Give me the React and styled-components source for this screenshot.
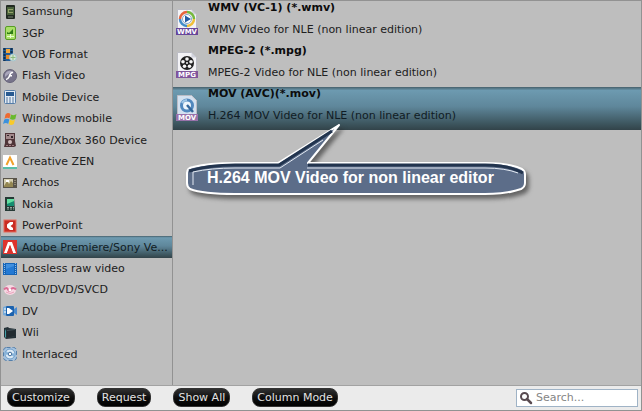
import { useState } from "react";
import styled, { createGlobalStyle, css } from "styled-components";

const devices = [
    { name: "Samsung", Icon: SamsungIcon },
    { name: "3GP", Icon: ThreeGpIcon },
    { name: "VOB Format", Icon: VobIcon },
    { name: "Flash Video", Icon: FlashIcon },
    { name: "Mobile Device", Icon: MobileIcon },
    { name: "Windows mobile", Icon: WindowsIcon },
    { name: "Zune/Xbox 360 Device", Icon: ZuneIcon },
    { name: "Creative ZEN", Icon: ZenIcon },
    { name: "Archos", Icon: ArchosIcon },
    { name: "Nokia", Icon: NokiaIcon },
    { name: "PowerPoint", Icon: PowerPointIcon },
    { name: "Adobe Premiere/Sony Ve...", Icon: AdobeIcon },
    { name: "Lossless raw video", Icon: LosslessIcon },
    { name: "VCD/DVD/SVCD", Icon: DiscIcon },
    { name: "DV", Icon: DvIcon },
    { name: "Wii", Icon: WiiIcon },
    { name: "Interlaced", Icon: InterlacedIcon },
];

const formats = [
    { title: "WMV (VC-1) (*.wmv)", text: "WMV Video for NLE (non linear edition)", Icon: WmvIcon },
    { title: "MPEG-2 (*.mpg)", text: "MPEG-2 Video for NLE (non linear edition)", Icon: MpgIcon },
    { title: "MOV (AVC)(*.mov)", text: "H.264 MOV Video for NLE (non linear edition)", Icon: MovIcon, hint: "H.264 MOV Video for non linear editor" },
];

const App = () => {
    const [device, setDevice] = useState("Adobe Premiere/Sony Ve...");
    const [format, setFormat] = useState("MOV (AVC)(*.mov)");
    const [search, setSearch] = useState("");

    return (
        <Window>
            <GlobalStyle />
            <Panels>
                <DeviceList>
                    {devices.map(({ name, Icon }) => (
                        <DeviceItem key={name}>
                            <DeviceButton type="button" $active={name === device} onClick={() => setDevice(name)}>
                                <Icon />
                                <span>{name}</span>
                            </DeviceButton>
                        </DeviceItem>
                    ))}
                </DeviceList>
                <FormatList>
                    {formats.map(({ title, text, hint, Icon }) => (
                        <FormatItem key={title}>
                            <FormatButton type="button" $active={title === format} onClick={() => setFormat(title)}>
                                <Icon />
                                <FormatText>
                                    <FormatTitle>{title}</FormatTitle>
                                    <span>{text}</span>
                                </FormatText>
                            </FormatButton>
                            {hint && title === format && (
                                <Callout role="note">
                                    <CalloutShape />
                                    <CalloutText>{hint}</CalloutText>
                                </Callout>
                            )}
                        </FormatItem>
                    ))}
                </FormatList>
            </Panels>
            <Footer>
                <Actions>
                    <PillButton type="button">Customize</PillButton>
                    <PillButton type="button">Request</PillButton>
                    <PillButton type="button">Show All</PillButton>
                    <PillButton type="button">Column Mode</PillButton>
                </Actions>
                <SearchBox>
                    <SearchIcon />
                    <SearchInput
                        type="text"
                        aria-label="Search"
                        placeholder="Search..."
                        value={search}
                        onChange={(e) => setSearch(e.target.value)}
                    />
                </SearchBox>
            </Footer>
        </Window>
    );
}

export default App

function Small({ children }) {
    return <SmallIcon viewBox="0 0 14 14" aria-hidden="true">{children}</SmallIcon>;
}

function SamsungIcon() {
    return (
        <Small>
            <rect x="3" y="0" width="9" height="14" rx="1" fill="#222a22" />
            <rect x="4" y="2" width="7" height="8" fill="#49613a" />
            <path d="M5 4h5v1H6v2h4v1H5z" fill="#95a36b" />
            <path d="M5 12h5" stroke="#75806e" />
        </Small>
    );
}

function ThreeGpIcon() {
    return (
        <Small>
            <rect x="2.5" y=".5" width="10" height="13" rx="1.5" fill="#a9df68" stroke="#579c25" />
            <path d="M4 8V6l2 1 4-4v5z" fill="#2f7d16" />
            <path d="M4 10.5h7M7.5 8v4" stroke="#e8ffd0" />
        </Small>
    );
}

function VobIcon() {
    return (
        <Small>
            <rect x="0" y="0" width="10" height="13" fill="#235d98" />
            <path d="M1.5 0v13M8.5 0v13" stroke="#13314f" strokeWidth="2" strokeDasharray="2 1" />
            <rect x="3" y="1" width="4" height="4" fill="#f3a63c" />
            <rect x="3" y="7" width="4" height="4" fill="#e58a2a" />
            <circle cx="10" cy="9.5" r="3.5" fill="#d5e5d4" stroke="#a5c5cf" />
            <path d="M10 7v5M7.5 9.5h5" stroke="#8dbb7e" />
        </Small>
    );
}

function FlashIcon() {
    return (
        <Small>
            <circle cx="7" cy="7" r="6.5" fill="#77748b" stroke="#666379" />
            <path d="M2 5a5.5 5.5 0 0 1 9-1.5C8 3 5 5 2 8z" fill="#aaa7bc" />
            <path d="M10 3.5C7 3 7 6 6 8s-1.5 2.500-3 2.500M6 6.8h3" fill="none" stroke="#fff" strokeWidth="1.600" />
        </Small>
    );
}

function MobileIcon() {
    return (
        <Small>
            <rect x="1.5" y=".5" width="11" height="13" rx="1" fill="#e2ebf4" stroke="#547da8" />
            <rect x="3" y="2" width="8" height="4" fill="#285a91" />
            <path d="M3 8h8M3 10h8M3 12h8" stroke="#55779e" strokeDasharray="2 1" />
        </Small>
    );
}

function WindowsIcon() {
    return (
        <Small>
            <path d="M2.500 2.500Q5 0 7.500 2L6.500 6.500Q4 5 1.500 7z" fill="#ed6a31" />
            <path d="M8 2.500q3 1.500 5.500-.5l-1.200 5Q10 8.500 7 7z" fill="#69b92d" />
            <path d="M1.300 7.500Q4 5.800 6.300 7.500L5.200 12Q3 10 0 12z" fill="#3b91dc" />
            <path d="M7 7.800q3 1.500 5 0L10.800 12Q8 14 5.800 12z" fill="#f8ca29" />
        </Small>
    );
}

function ZuneIcon() {
    return (
        <Small>
            <path d="M2 0h10v8l1 5-2 1H1l1-4z" fill="#503538" />
            <rect x="3" y="1" width="8" height="5" fill="#a2898b" />
            <path d="M4 2h2v1H4zm4 1h2v2H8z" fill="#312428" />
            <circle cx="7" cy="9" r="2" fill="#d0bbbc" />
            <path d="M3 12.500h8" stroke="#9f787c" strokeDasharray="2 1" />
        </Small>
    );
}

function ZenIcon() {
    return (
        <Small>
            <path fill="#fff" d="M0 0h14v14H0z" />
            <path d="M3.500 10L7 2.500l3.500 7.500" fill="none" stroke="#f0a12c" strokeWidth="2" />
            <path d="M0 13h14" stroke="#58bea8" strokeWidth="2" />
        </Small>
    );
}

function ArchosIcon() {
    return (
        <Small>
            <path fill="#595449" d="M0 2h14v10H0z" />
            <path fill="#d6d0b2" d="M1 3h9v8H1z" />
            <path d="M1 10l3-5 2 3 2-3 2 2v4H1z" fill="#948752" />
            <path d="M3 4h3v2H3z" fill="#fff" />
            <path d="M12 4v6" stroke="#c6bca4" strokeDasharray="1 1" />
        </Small>
    );
}

function NokiaIcon() {
    return (
        <Small>
            <path fill="#263a36" d="M2 0h9l1 14H2z" />
            <path fill="#168d70" d="M4 2h7v7H4z" />
            <path fill="#62dfa0" d="M4 2h7v2L4 7z" />
            <path d="M4 10.500h7M4 12h7" stroke="#98aaa0" strokeDasharray="2 1" />
        </Small>
    );
}

function PowerPointIcon() {
    return (
        <Small>
            <rect x="1" y="1" width="12" height="12" fill="#c92c22" stroke="#e46b5c" />
            <path d="M10 3H7L4 5.500v3L7 11h3V9L7.500 7 10 5z" fill="#fff" />
        </Small>
    );
}

function AdobeIcon() {
    return (
        <Small>
            <path fill="#de332d" d="M0 0h14v14H0z" />
            <path d="M5 2h4l4 11h-3L7 5 4 13H1z" fill="#fff" />
            <path d="M7 5l3 8H4z" fill="#de332d" />
        </Small>
    );
}

function LosslessIcon() {
    return (
        <Small>
            <path fill="#1664b7" d="M0 1h14v12H0z" />
            <path fill="#2379d4" d="M3 2h8v10H3z" />
            <path d="M1.500 1v12M12.500 1v12" stroke="#8fbce8" strokeDasharray="1 1" />
            <path d="M3 2h8v2L3 7z" fill="#408fdf" />
        </Small>
    );
}

function DiscIcon() {
    return (
        <Small>
            <ellipse cx="7" cy="7" rx="6" ry="5" fill="#f6d8e3" />
            <path d="M1 6.500c2-2 3-2 4 0s2 2 3 0 3-2 5 0" fill="none" stroke="#d96d95" strokeWidth="2" />
            <circle cx="7" cy="7" r="1.500" fill="#fff" />
            <path d="M3 9q4 3 8 0" fill="none" stroke="#eaa3bd" />
        </Small>
    );
}

function DvIcon() {
    return (
        <Small>
            <path d="M0 3l3-1v10l-3-1z" fill="#78abd9" />
            <rect x="3" y="2" width="8" height="10" rx="1" fill="#1c62ae" />
            <path d="M4 4h2l4 3-4 3H4z" fill="#fff" />
            <path d="M11 5l3-2v8l-3-2z" fill="#4b8bcf" />
            <path d="M2 4v6" stroke="#fff" strokeDasharray="2 1" />
        </Small>
    );
}

function WiiIcon() {
    return (
        <Small>
            <path d="M1 2l4-1 1 1 7 1v9L3 13 1 11z" fill="#253137" />
            <path d="M4 4l8-1v7l-8 2z" fill="#46545a" />
            <path d="M2 3v8l1 1V5z" fill="#44a0a7" />
            <path d="M4 5l8-1v6l-8 2z" fill="#222b30" />
        </Small>
    );
}

function InterlacedIcon() {
    return (
        <Small>
            <rect x=".5" y=".5" width="13" height="13" rx="3" fill="#a4c2df" stroke="#547faa" strokeDasharray="4 2" />
            <circle cx="7" cy="7" r="5" fill="#dceaf6" stroke="#6b9bc7" />
            <path d="M3 4l4 3-5 1zm8 6L7 7l5-1z" fill="#89b5dc" />
            <circle cx="7" cy="7" r="1.800" fill="#fff" stroke="#416f9d" />
        </Small>
    );
}

function FileIcon({ label, color, children }) {
    return (
        <BigIcon viewBox="0 0 22 27" aria-hidden="true">
            <path d="M1.500.5h14l5 5v20h-19z" fill="#f3f3f6" stroke="#bbbcc5" />
            <path d="M15.500.5v5h5z" fill="#d2d3dc" />
            {children}
            <rect x="0" y="19" width="22" height="7" fill={color} />
            <text x="11" y="25" textAnchor="middle" fontFamily="DejaVu Sans, sans-serif" fontWeight="700" fontSize="7" fill="#fff">{label}</text>
        </BigIcon>
    );
}

function WmvIcon() {
    return (
        <FileIcon label="WMV" color="#67469a">
            <path d="M4 10a7 7 0 0 1 7-7" fill="none" stroke="#e7643d" strokeWidth="2.500" />
            <path d="M11 3a7 7 0 0 1 7 7" fill="none" stroke="#75b83e" strokeWidth="2.500" />
            <path d="M18 10a7 7 0 0 1-7 7" fill="none" stroke="#efbf37" strokeWidth="2.500" />
            <path d="M11 17a7 7 0 0 1-7-7" fill="none" stroke="#438dc8" strokeWidth="2.500" />
            <circle cx="11" cy="10" r="4.500" fill="#fff" stroke="#8ca9c8" />
            <path d="M9 6.500l6 3.500-6 3.500z" fill="#245ca4" />
        </FileIcon>
    );
}

function MpgIcon() {
    return (
        <FileIcon label="MPG" color="#80559c">
            <circle cx="11" cy="11" r="7" fill="#202020" />
            <g fill="#f5f5f5">
                <circle cx="11" cy="7" r="1.800" />
                <circle cx="15" cy="9.800" r="1.800" />
                <circle cx="13.500" cy="14.300" r="1.800" />
                <circle cx="8.500" cy="14.300" r="1.800" />
                <circle cx="7" cy="9.800" r="1.800" />
                <circle cx="11" cy="11" r="1" />
            </g>
        </FileIcon>
    );
}

function MovIcon() {
    return (
        <FileIcon label="MOV" color="#9872aa">
            <path d="M2 1h13l5 5v13H2z" fill="#d3e1f0" />
            <circle cx="11" cy="10.500" r="5.500" fill="#edf5fc" stroke="#5188be" strokeWidth="3" />
            <path d="M11 10l6 7" stroke="#33669b" strokeWidth="2.500" />
            <path d="M6 8a6 6 0 0 1 5-3" fill="none" stroke="#9fc6e6" strokeWidth="2" />
        </FileIcon>
    );
}

function SearchIcon() {
    return (
        <Small>
            <circle cx="5.500" cy="5.500" r="3.500" fill="#fff" stroke="#594b51" strokeWidth="2" />
            <path d="M8 8l4 4" stroke="#594b51" strokeWidth="2.500" strokeLinecap="round" />
        </Small>
    );
}

function CalloutShape() {
    return (
        <Bubble viewBox="0 0 350 84" aria-hidden="true">
            <path
                d="M2 49Q2 44 8 43Q24 39 50 39H93L154 1 123 39H300Q324 39 337 45Q340 47 340 50V59Q340 63 336 65Q322 70 300 70H50Q18 70 5 65Q2 63 2 59z"
                fill="#5c6d89"
                stroke="#fff"
                strokeWidth="2"
                strokeLinejoin="round"
            />
            <path d="M4 47Q24 41 50 41H94L147 7" fill="none" stroke="#22344e" strokeWidth="3" />
            <path d="M123 41H300Q324 41 338 49" fill="none" stroke="#22344e" strokeWidth="3" />
            <path d="M8 61V48Q26 44 50 44H95L138 16" fill="none" stroke="#e3eaf3" />
            <path d="M122 44H300Q320 44 333 49" fill="none" stroke="#e3eaf3" />
        </Bubble>
    );
}

const GlobalStyle = createGlobalStyle`
    * {
        box-sizing: border-box;
    }
    body {
        margin: 0;
        background-color: #bebebe;
        font-family: "DejaVu Sans", Verdana, sans-serif;
        font-size: 11px;
        color: #202020;
    }
    button, input {
        font: inherit;
        color: inherit;
    }
    ul {
        list-style: none;
        margin: 0;
        padding: 0;
    }
`;

const Window = styled.div`
    display: flex;
    flex-direction: column;
    min-height: 100vh;
    border: 1px solid #929292;
`;

const Panels = styled.main`
    flex: 1;
    display: flex;
    background-color: #bebebe;
`;

const DeviceList = styled.ul`
    flex: none;
    display: flex;
    flex-direction: column;
    width: 172px;
    && {
        padding-bottom: 20px;
    }
    border-right: 1px solid #929292;
`;

const DeviceItem = styled.li`
    flex: 1;
    display: flex;
`;

const activeRow = css`
    background: linear-gradient(#46606b, #6d9ab0 8%, #5f879b 45%, #3d565f 85%, #324349);
    color: #101c24;
`;

const DeviceButton = styled.button`
    flex: 1;
    display: flex;
    align-items: center;
    gap: 5px;
    padding: 0 2px;
    border: 0;
    background: none;
    text-align: left;
    white-space: nowrap;
    ${(props) => props.$active && activeRow}
`;

const SmallIcon = styled.svg`
    flex: none;
    width: 14px;
    height: 14px;
`;

const BigIcon = styled.svg`
    flex: none;
    width: 22px;
    height: 27px;
    margin-top: 8px;
`;

const FormatList = styled.ul`
    flex: 1;
    min-width: 0;
`;

const FormatItem = styled.li`
    position: relative;
`;

const FormatButton = styled.button`
    display: flex;
    align-items: flex-start;
    gap: 10px;
    width: 100%;
    padding: 0 3px 7px;
    border: 0;
    background: none;
    text-align: left;
    ${(props) => props.$active && activeRow}
`;

const FormatText = styled.span`
    display: flex;
    flex-direction: column;
    gap: 8px;
    line-height: 14px;
`;

const FormatTitle = styled.strong`
    color: #0c0c0c;
`;

const Callout = styled.div`
    position: absolute;
    z-index: 1;
    top: 37px;
    left: 12px;
    width: 350px;
    height: 84px;
    pointer-events: none;
`;

const Bubble = styled.svg`
    display: block;
    width: 350px;
    height: 84px;
    filter: drop-shadow(3px 4px 2px rgba(40, 40, 40, 0.6));
`;

const CalloutText = styled.span`
    position: absolute;
    top: 45px;
    left: 22px;
    font-family: "Liberation Sans", Arial, sans-serif;
    font-size: 16px;
    font-weight: 700;
    line-height: 18px;
    color: #fff;
    white-space: nowrap;
`;

const Footer = styled.footer`
    display: flex;
    align-items: center;
    justify-content: space-between;
    padding: 2px 3px 3px 6px;
    border-top: 1px solid #a2a2a2;
    background-color: #ebebeb;
`;

const Actions = styled.div`
    display: flex;
    gap: 22px;
`;

const PillButton = styled.button`
    height: 19px;
    padding: 0 4px;
    border: 1px solid #333;
    border-radius: 8px;
    background: linear-gradient(#303030, #0c0c0c 55%, #000);
    color: #e2e2e2;
    line-height: 17px;
    white-space: nowrap;
`;

const SearchBox = styled.label`
    display: flex;
    align-items: center;
    gap: 3px;
    width: 122px;
    height: 18px;
    padding: 0 2px;
    border: 1px solid #9fb3c6;
    background-color: #fff;
`;

const SearchInput = styled.input`
    flex: 1;
    min-width: 0;
    padding: 0;
    border: 0;
    outline: 0;
    background: none;
    &::placeholder {
        color: #858585;
        opacity: 1;
    }
`;
